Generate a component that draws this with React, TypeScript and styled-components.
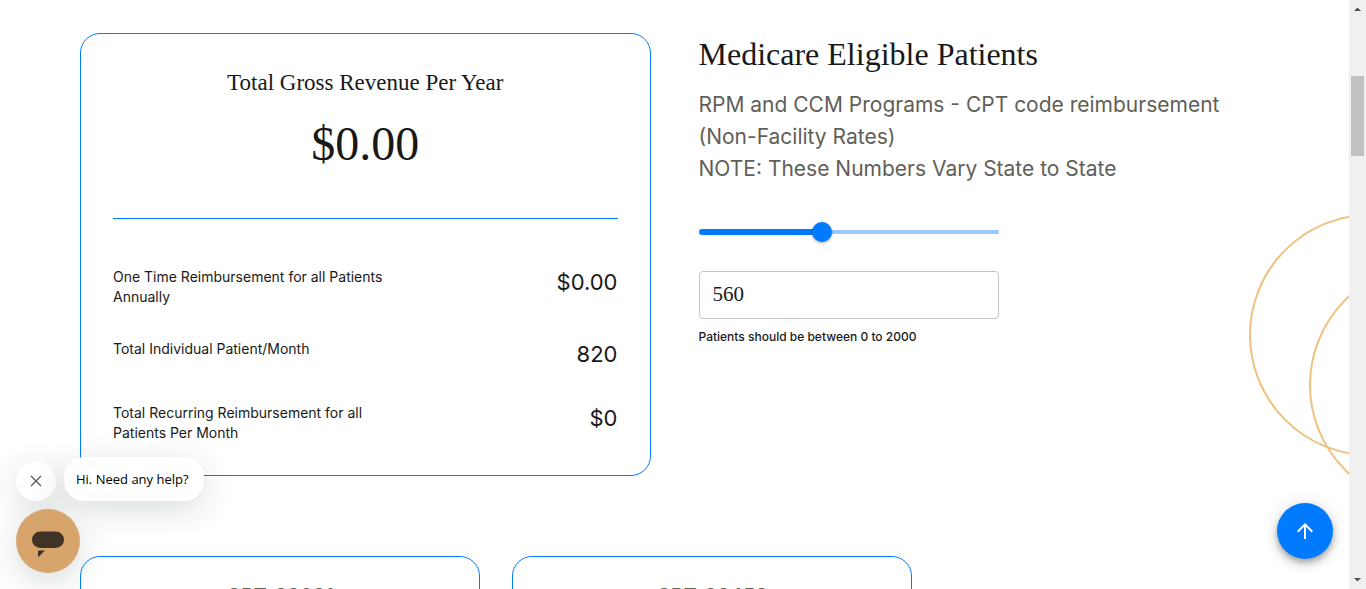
import React, { useState } from 'react';
import styled, { createGlobalStyle } from 'styled-components';

const blue = '#007bff';
const serif = '"Liberation Serif", serif';
const sans = 'Inter, "Liberation Sans", sans-serif';

const GlobalStyle = createGlobalStyle`
  * { box-sizing: border-box; }
  html, body { margin: 0; overflow: hidden; }
  body { background: #fff; color: #191919; font-family: ${sans}; }
  h1, h2, h3, p, dl, dt, dd { margin: 0; font-weight: 400; }
`;

const Window = styled.div`
  display: flex;
  height: 100vh;
`;

const Page = styled.div`
  position: relative;
  flex: 1;
  min-width: 0;
  overflow: hidden;
`;

const Main = styled.main`
  padding: 33px 80px 0;
`;

const Calculator = styled.section`
  display: grid;
  grid-template-columns: 1fr 1fr;
  gap: 48px;
`;

const Card = styled.article`
  border: 1px solid ${blue};
  border-radius: 20px;
  padding: 32px;
`;

const CardTitle = styled.h2`
  font: 400 23px/34px ${serif};
  text-align: center;
`;

const Total = styled.p`
  padding: 14px 0 44px;
  font: 400 48px/60px ${serif};
  text-align: center;
`;

const Figures = styled.dl`
  display: grid;
  gap: 32px;
  padding-top: 48px;
  border-top: 1px solid ${blue};
`;

const Figure = styled.div`
  display: flex;
  justify-content: space-between;
  min-height: 32px;
`;

const FigureName = styled.dt`
  width: 60%;
  max-width: 280px;
  font-size: 14px;
  line-height: 20px;
`;

const FigureValue = styled.dd`
  font-size: 22px;
  line-height: 30px;
`;

const Title = styled.h1`
  font: 400 32px/42px ${serif};
`;

const Note = styled.p`
  padding: 14px 0 37px;
  color: #5f6058;
  font-size: 21px;
  line-height: 32px;
`;

const Controls = styled.div`
  display: flex;
  flex-direction: column;
  max-width: 300px;
`;

const Slider = styled.input<{ $percent: number }>`
  appearance: none;
  width: 100%;
  height: 20px;
  margin: 0 0 29px;
  background: none;
  cursor: pointer;

  &::-webkit-slider-runnable-track {
    height: 6px;
    border-radius: 3px;
    background:
      linear-gradient(${blue}, ${blue}) left / ${p => p.$percent}% 6px no-repeat,
      linear-gradient(#99caff, #99caff) center / 100% 4px no-repeat;
  }

  &::-webkit-slider-thumb {
    appearance: none;
    width: 20px;
    height: 20px;
    margin-top: -7px;
    border-radius: 50%;
    background: ${blue};
    box-shadow: 0 1px 3px rgba(0, 0, 0, 0.35);
  }
`;

const CountInput = styled.input`
  height: 48px;
  padding: 0 13px 2px;
  border: 1px solid #c4c4c4;
  border-radius: 4px;
  color: #191919;
  font: 400 21px/32px ${serif};
`;

const Hint = styled.label`
  padding-top: 8px;
  font-size: 12px;
  line-height: 20px;
  font-weight: 500;
`;

const Codes = styled.section`
  display: flex;
  gap: 32px;
  padding-top: 80px;
`;

const CodeCard = styled(Card)`
  flex: 0 1 400px;
  min-height: 240px;
  padding: 23px 32px;
`;

const CodeTitle = styled.h3`
  color: #5f6058;
  font-size: 20px;
  line-height: 32px;
  font-weight: 500;
  text-align: center;
`;

const Rings = styled.svg`
  position: absolute;
  top: 205px;
  right: 0;
`;

const Chat = styled.aside`
  position: absolute;
  left: 16px;
  bottom: 16px;
  display: grid;
  gap: 8px;
`;

const ChatRow = styled.div`
  display: flex;
  align-items: flex-end;
  gap: 8px;
`;

const chatShadow = '0 8px 32px rgba(0, 40, 40, 0.16)';

const CloseButton = styled.button`
  display: grid;
  place-items: center;
  width: 40px;
  height: 40px;
  padding: 0;
  border: 0;
  border-radius: 50%;
  background: #fff;
  box-shadow: ${chatShadow};
`;

const Greeting = styled.p`
  min-width: 140px;
  padding: 12px;
  border-radius: 20px;
  background: #fff;
  color: #000;
  font: 400 13px/20px "Open Sans", "Noto Sans", sans-serif;
  box-shadow: ${chatShadow};
`;

const ChatButton = styled.button`
  width: 64px;
  height: 64px;
  padding: 0;
  border: 0;
  border-radius: 50%;
  background: #d7a56c;
  box-shadow: ${chatShadow};
`;

const TopButton = styled.button`
  position: absolute;
  right: 16px;
  bottom: 30px;
  display: grid;
  place-items: center;
  width: 56px;
  height: 56px;
  padding: 0;
  border: 0;
  border-radius: 50%;
  background: ${blue};
  box-shadow: 0 3px 5px rgba(0, 0, 0, 0.2), 0 6px 10px rgba(0, 0, 0, 0.14),
    0 1px 18px rgba(0, 0, 0, 0.12);
`;

const Scrollbar = styled.div`
  display: flex;
  flex-direction: column;
  align-items: center;
  width: 17px;
  background: #f0f0f0;
`;

const ScrollArrow = styled.svg`
  flex: none;
  width: 17px;
  height: 17px;
  fill: #505050;
`;

const ScrollTrack = styled.div`
  flex: 1;
  padding-top: 59px;
`;

const ScrollThumb = styled.div`
  width: 13px;
  height: 80px;
  background: #c1c1c1;
`;

const figures = [
  { name: 'One Time Reimbursement for all Patients Annually', value: '$0.00' },
  { name: 'Total Individual Patient/Month', value: '820' },
  { name: 'Total Recurring Reimbursement for all Patients Per Month', value: '$0' },
];

const maxPatients = 2000;

export default function App() {
  const [position, setPosition] = useState(808);
  const [patients, setPatients] = useState('560');

  return (
    <Window>
      <GlobalStyle />
      <Page>
        <Rings width="100" height="290" viewBox="0 0 100 290" fill="none" stroke="#efc17f" strokeWidth="2" aria-hidden="true">
          <circle cx="121" cy="130" r="120" />
          <circle cx="181" cy="180" r="120" />
        </Rings>
        <Main>
          <Calculator>
            <Card>
              <CardTitle>Total Gross Revenue Per Year</CardTitle>
              <Total>$0.00</Total>
              <Figures>
                {figures.map(f => (
                  <Figure key={f.name}>
                    <FigureName>{f.name}</FigureName>
                    <FigureValue>{f.value}</FigureValue>
                  </Figure>
                ))}
              </Figures>
            </Card>
            <div>
              <Title>Medicare Eligible Patients</Title>
              <Note>
                RPM and CCM Programs - CPT code reimbursement (Non-Facility Rates)
                <br />
                NOTE: These Numbers Vary State to State
              </Note>
              <Controls>
                <Slider
                  type="range"
                  min={0}
                  max={maxPatients}
                  value={position}
                  $percent={(position / maxPatients) * 100}
                  aria-label="Medicare eligible patients"
                  onChange={e => setPosition(Number(e.target.value))}
                />
                <CountInput
                  id="patients"
                  inputMode="numeric"
                  value={patients}
                  onChange={e => setPatients(e.target.value)}
                />
                <Hint htmlFor="patients">Patients should be between 0 to 2000</Hint>
              </Controls>
            </div>
          </Calculator>
          <Codes>
            <CodeCard><CodeTitle>CPT-99091</CodeTitle></CodeCard>
            <CodeCard><CodeTitle>CPT-99453</CodeTitle></CodeCard>
          </Codes>
        </Main>
        <Chat>
          <ChatRow>
            <CloseButton aria-label="Close message">
              <svg width="12" height="12" viewBox="0 0 12 12" stroke="#4d5757" strokeWidth="1.2" aria-hidden="true">
                <path d="M1 1l10 10M11 1L1 11" />
              </svg>
            </CloseButton>
            <Greeting>Hi. Need any help?</Greeting>
          </ChatRow>
          <ChatButton aria-label="Open chat">
            <svg width="64" height="64" viewBox="0 0 64 64" fill="#403224" aria-hidden="true">
              <rect x="16" y="22.500" width="32" height="16.500" rx="8.250" />
              <path d="M22 41.500h7l-6.500 6.500H22z" />
            </svg>
          </ChatButton>
        </Chat>
        <TopButton aria-label="Back to top">
          <svg width="24" height="24" viewBox="0 0 24 24" fill="#fff" aria-hidden="true">
            <path d="M4 12l1.410 1.410L11 7.830V20h2V7.830l5.580 5.590L20 12l-8-8-8 8z" />
          </svg>
        </TopButton>
      </Page>
      <Scrollbar aria-hidden="true">
        <ScrollArrow viewBox="0 0 17 17"><path d="M5 11h7L8.500 7.500z" /></ScrollArrow>
        <ScrollTrack><ScrollThumb /></ScrollTrack>
        <ScrollArrow viewBox="0 0 17 17"><path d="M5 6h7L8.500 9.500z" /></ScrollArrow>
      </Scrollbar>
    </Window>
  );
}
